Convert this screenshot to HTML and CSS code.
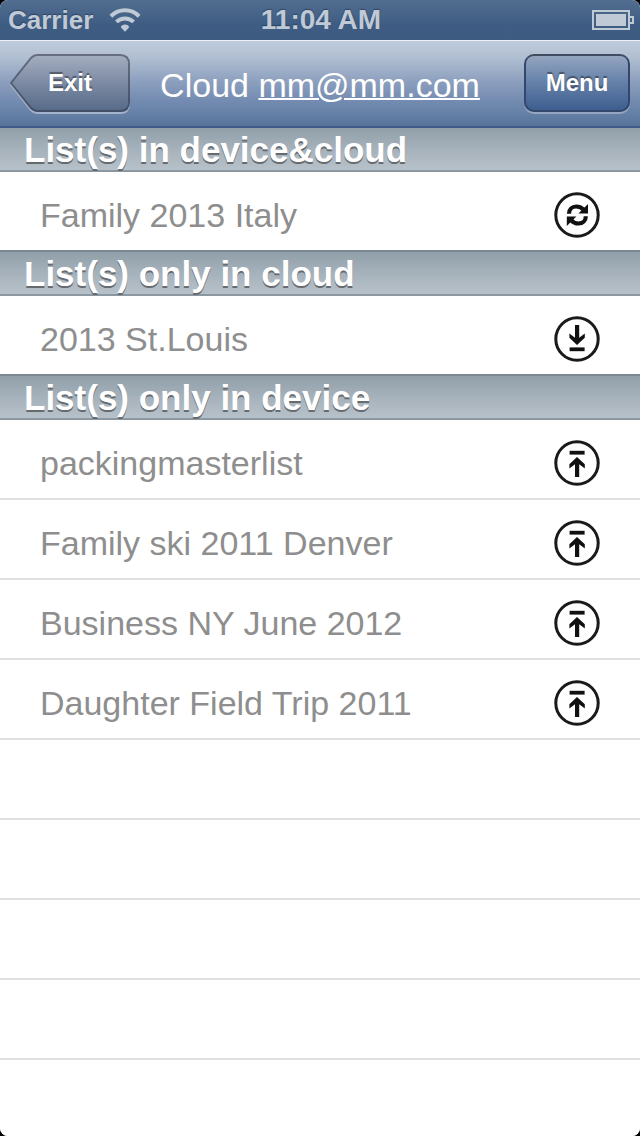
FILE: index.html
```html
<!DOCTYPE html>
<html lang="en">
<head>
  <meta charset="UTF-8">
  <meta name="viewport" content="width=device-width, initial-scale=1.0">
  <title>Cloud</title>
  <link rel="stylesheet" href="styles.css">
</head>
<body>

  <!-- Icons shared by the rows -->
  <svg class="sprite" aria-hidden="true">
    <symbol id="icon-sync" viewBox="0 0 46 46">
      <circle cx="23" cy="23" r="21.2" fill="#fff" stroke="#1a1a1a" stroke-width="3"/>
      <g id="half">
        <path d="M15 21.8 C15 17.4 18.2 14.5 22.2 14.5 C25.4 14.5 28 15.8 30 18.2" fill="none" stroke="#111" stroke-width="4.2"/>
        <path d="M34 12 V21.6 H24.4 Z" fill="#111"/>
      </g>
      <use href="#half" transform="rotate(180 23.4 23)"/>
    </symbol>
    <symbol id="icon-download" viewBox="0 0 46 46">
      <circle cx="23" cy="23" r="21.2" fill="#fff" stroke="#1a1a1a" stroke-width="3"/>
      <path d="M21 9 H25.2 V21.8 L30.8 17.4 V21.8 L23 29 L15.4 21.8 V17.4 L21 21.8 Z" fill="#111"/>
      <path d="M15.6 31.4 H30.6 V35.2 H15.6 Z" fill="#111"/>
    </symbol>
    <symbol id="icon-upload" viewBox="0 0 46 46">
      <circle cx="23" cy="23" r="21.2" fill="#fff" stroke="#1a1a1a" stroke-width="3"/>
      <path d="M21 37 H25.2 V24.2 L30.8 28.6 V24.2 L23 17 L15.4 24.2 V28.6 L21 24.2 Z" fill="#111"/>
      <path d="M15.6 10.8 H30.6 V14.6 H15.6 Z" fill="#111"/>
    </symbol>
  </svg>

  <div class="app">
    <div class="status-bar">
      <div class="carrier">
        <span>Carrier</span>
        <svg class="wifi" viewBox="0 0 32 24" aria-hidden="true">
          <path d="M1.9 8.2 C10 0.4 22 0.4 30.1 8.2" fill="none" stroke="#c0cad6" stroke-width="4"/>
          <path d="M7.4 13.9 C12.4 9.2 19.6 9.2 24.6 13.9" fill="none" stroke="#c0cad6" stroke-width="4"/>
          <path d="M16 23.8 L11.8 19.2 C12.8 15.6 19.2 15.6 20.2 19.2 Z" fill="#c0cad6"/>
        </svg>
      </div>
      <div class="time">11:04 AM</div>
      <svg class="battery" viewBox="0 0 42 20" aria-hidden="true">
        <path d="M1 1 H37 V19 H1 Z" fill="none" stroke="#c0cad6" stroke-width="2"/>
        <path d="M4 4 H34 V16 H4 Z" fill="#c0cad6"/>
        <path d="M38 7 H41 V13 H38" fill="none" stroke="#c0cad6" stroke-width="2"/>
      </svg>
    </div>

    <header class="nav-bar">
      <button class="btn btn-back" type="button">
        <svg class="back-shape" viewBox="0 0 120 60" preserveAspectRatio="none" aria-hidden="true">
          <defs>
            <linearGradient id="back-fill" x1="0" y1="0" x2="0" y2="1">
              <stop offset="0" stop-color="#a4aec0"/>
              <stop offset="0.5" stop-color="#7c8aa3"/>
              <stop offset="1" stop-color="#566a88"/>
            </linearGradient>
            <linearGradient id="back-line" x1="0" y1="0" x2="0" y2="1">
              <stop offset="0" stop-color="#666e80"/>
              <stop offset="1" stop-color="#424f66"/>
            </linearGradient>
          </defs>
          <path d="M27 3 H110 Q119 3 119 12 V50 Q119 59 110 59 H27 Q24 59 21 56 L1 31 L21 6 Q24 3 27 3 Z" fill="none" stroke="#a3b3cb" stroke-width="2"/>
          <path d="M27 1 H110 Q119 1 119 10 V48 Q119 57 110 57 H27 Q24 57 21 54 L1 29 L21 4 Q24 1 27 1 Z" fill="url(#back-fill)" stroke="url(#back-line)" stroke-width="2"/>
        </svg>
        <span class="btn-label">Exit</span>
      </button>
      <h1 class="title">Cloud <a href="mailto:mm@mm.com">mm@mm.com</a></h1>
      <button class="btn btn-menu" type="button">Menu</button>
    </header>

    <main class="lists">
      <section class="group">
        <h2 class="group-title">List(s) in device&amp;cloud</h2>
        <ul class="rows">
          <li class="row"><span>Family 2013 Italy</span><button class="action" type="button" aria-label="Sync"><svg><use href="#icon-sync"/></svg></button></li>
        </ul>
      </section>

      <section class="group">
        <h2 class="group-title">List(s) only in cloud</h2>
        <ul class="rows">
          <li class="row"><span>2013 St.Louis</span><button class="action" type="button" aria-label="Download"><svg><use href="#icon-download"/></svg></button></li>
        </ul>
      </section>

      <section class="group">
        <h2 class="group-title">List(s) only in device</h2>
        <ul class="rows">
          <li class="row"><span>packingmasterlist</span><button class="action" type="button" aria-label="Upload"><svg><use href="#icon-upload"/></svg></button></li>
          <li class="row"><span>Family ski 2011 Denver</span><button class="action" type="button" aria-label="Upload"><svg><use href="#icon-upload"/></svg></button></li>
          <li class="row"><span>Business NY June 2012</span><button class="action" type="button" aria-label="Upload"><svg><use href="#icon-upload"/></svg></button></li>
          <li class="row"><span>Daughter Field Trip 2011</span><button class="action" type="button" aria-label="Upload"><svg><use href="#icon-upload"/></svg></button></li>
        </ul>
      </section>

      <div class="empty-rows"></div>
    </main>
  </div>

</body>
</html>
```
FILE: styles.css
```css
* {
  box-sizing: border-box;
}

html {
  background: #000;
}

body {
  margin: 0;
  font-family: "Liberation Sans", Arial, Helvetica, sans-serif;
}

.sprite {
  display: none;
}

.app {
  display: flex;
  flex-direction: column;
  min-height: 100vh;
  background: #fff;
  border-radius: 8px;
  overflow: hidden;
}

/* Status bar */
.status-bar {
  display: grid;
  grid-template-columns: 1fr auto 1fr;
  align-items: center;
  height: 40px;
  padding: 0 6px 0 8px;
  background: linear-gradient(#526d8f, #3f5d84 60%, #3d5a80);
  color: #c0cad6;
  font-size: 26px;
  font-weight: bold;
  text-shadow: 0 -1px 1px rgba(20, 35, 60, 0.5);
}

.carrier {
  display: flex;
  align-items: center;
  gap: 16px;
}

.time {
  font-size: 28px;
}

.wifi {
  width: 32px;
  height: 24px;
}

.battery {
  width: 42px;
  height: 20px;
  justify-self: end;
}

/* Navigation bar */
.nav-bar {
  display: grid;
  grid-template-columns: 1fr auto 1fr;
  align-items: center;
  height: 88px;
  padding: 0 10px;
  border-bottom: 2px solid #405b8a;
  background: linear-gradient(#c0ccdc, #b0bfd1 20%, #8a9dbd 50%, #6f88ae 75%, #58749b);
  box-shadow: inset 0 1px 0 #eef2f7;
}

.title {
  margin: 0;
  padding-top: 4px;
  color: #fff;
  font-size: 34px;
  font-weight: normal;
}

.title a {
  color: #fff;
  text-decoration-thickness: 2px;
}

.btn {
  height: 58px;
  padding: 0;
  border: 0;
  color: #fff;
  font-family: inherit;
  font-size: 24px;
  font-weight: bold;
  text-shadow: 0 -2px 1px rgba(0, 0, 0, 0.4);
}

.btn-back {
  position: relative;
  width: 120px;
  background: none;
}

.back-shape {
  position: absolute;
  top: 0;
  left: 0;
  width: 100%;
  height: 60px;
}

.btn-label {
  position: relative;
}

.btn-menu {
  justify-self: end;
  width: 106px;
  border: 2px solid #34476a;
  border-top-color: #414c62;
  border-radius: 10px;
  background: linear-gradient(#94a5c0, #6480a8 50%, #3d5e90);
  box-shadow: 0 2px 0 rgba(255, 255, 255, 0.3);
}

/* Lists */
.lists {
  display: flex;
  flex: 1;
  flex-direction: column;
}

.group-title {
  display: flex;
  align-items: center;
  height: 44px;
  margin: 0;
  padding: 2px 24px 0;
  border-bottom: 2px solid #8b97a1;
  background: linear-gradient(#909fa9, #a4b0b9 45%, #b7c1ca);
  color: #fff;
  font-size: 35px;
  font-weight: bold;
  text-shadow: 0 2px 0 #666b70;
}

.group + .group {
  border-top: 2px solid #7b8894;
}

.rows {
  margin: 0;
  padding: 0;
  list-style: none;
}

.row {
  display: flex;
  align-items: center;
  justify-content: space-between;
  height: 80px;
  padding: 8px 40px 0;
  border-bottom: 2px solid #e0e0e0;
  color: #8e8e8e;
  font-size: 34px;
}

/* The next group draws its own line here */
.group:not(:nth-of-type(3)) .row:last-child {
  height: 78px;
  border-bottom: 0;
}

.action {
  width: 46px;
  height: 46px;
  padding: 0;
  border: 0;
  background: none;
}

.action svg {
  display: block;
  width: 46px;
  height: 46px;
}

/* Ruled lines down to the bottom of the screen */
.empty-rows {
  flex: 1;
  background: repeating-linear-gradient(#fff 0, #fff 78px, #e0e0e0 78px, #e0e0e0 80px);
}
```
